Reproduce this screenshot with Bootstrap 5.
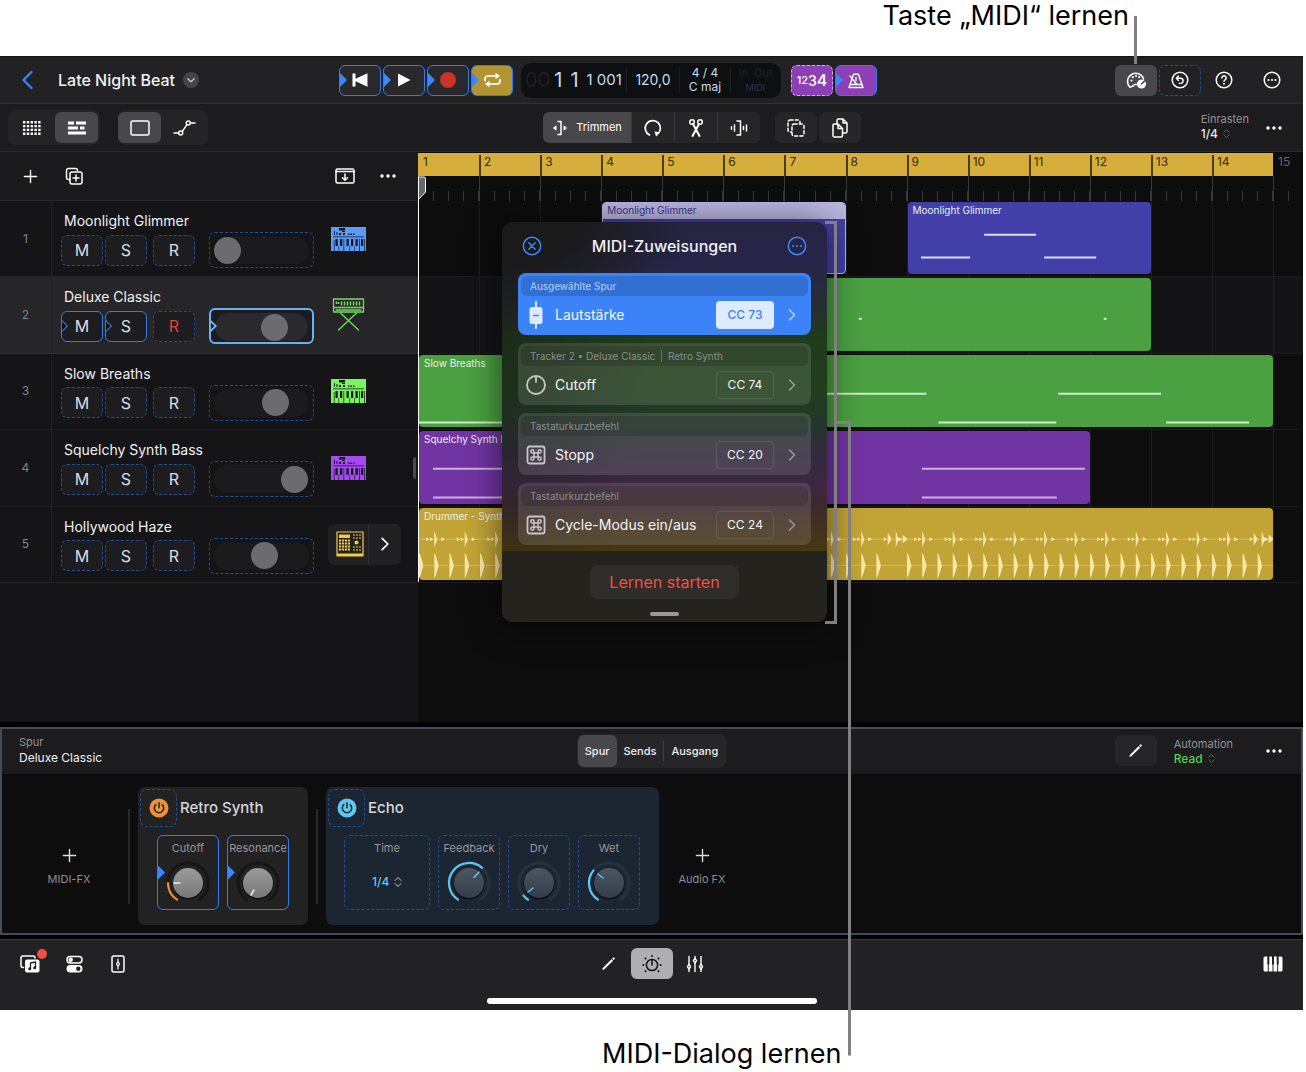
<!DOCTYPE html>
<html lang="de">
<head>
<meta charset="utf-8">
<meta name="viewport" content="width=device-width, initial-scale=1">
<title>Late Night Beat – MIDI-Zuweisungen</title>
<link href="https://cdn.jsdelivr.net/npm/bootstrap@5.3.0/dist/css/bootstrap.min.css" rel="stylesheet">
<style>
:root{--blue:#2f7cf0;--line:#2c2c2e;--cyan:#5ac8f5;--gold:#d7ae3b;fill:none;stroke:currentColor;stroke-width:1.5;stroke-linecap:round;stroke-linejoin:round}
body{background:#fff;font-family:Inter,"Noto Sans",sans-serif;font-size:14px;line-height:16px;color:#f0f0f2}
svg{display:block;flex:none}
.f{fill:currentColor;stroke:none}
.callout{margin:0;color:#000;font-size:27px;line-height:32px}
.callout-top{height:56px;padding-right:177px;text-align:right}
.callout-bottom{padding:28px 0 0 602px;height:61px}
.studio{margin-right:3px;background:#000;position:relative}
.half{flex:1 1 0;min-width:0}
.bar-top{height:48px;background:#222224;border-bottom:1px solid #333335;border-top:1px solid #151515}
.lead-col{width:339px}
.song{font-size:16px;font-weight:500}
.key,.tool{display:flex;align-items:center;justify-content:center;width:42px;height:31px;padding:0;border:1px solid transparent;border-radius:6px;color:#fff;background:transparent;position:relative;overflow:hidden;flex:none}
.key:hover,.tool:hover{color:#fff}
.mapped{border-color:var(--blue);background:#29292c}
.mapped::before{content:"";position:absolute;left:0;top:50%;margin-top:-7px;width:7px;height:14px;background:#3a86fb;clip-path:polygon(0 0,100% 50%,0 100%)}
.dotted{border:1px dashed #214f96}
.hollow{border-color:var(--blue);background:#2c2c30}
.hollow::before{content:"";position:absolute;left:-6px;top:50%;margin-top:-5px;width:10px;height:10px;border:1px solid #3a86fb;transform:rotate(45deg);background:#111}
.cyc{background:#b39432}
.pur,.pur:hover{background:#8d3fb5}
.btn.pur.dotted{border-color:#d9a6f0}
.on,.on:hover{background:#48484c}
.lcd{width:260px;height:35px;border-radius:10px;background:#0d0f10;color:#c7dcf2}
.lcd>div{height:28px;border-left:1px solid #1a1d20}
.lcd>div:first-child{border:0}
.dim{color:#1d2023}
.count-in{margin-left:10px}
.tools{height:48px;background:#1c1c1e;border-bottom:1px solid #29292b}
.set{background:#242427;border-radius:8px;padding:2px;gap:2px}
.set .tool{width:43px;height:31px}
.cap{font-size:11px;line-height:14px;color:#929297}
.pick{appearance:none;background:transparent;border:0;padding:0;color:#e8e8ea;font:500 12px/14px Inter,sans-serif;outline:0}
.flat{background:#262629}
.left{width:418px;flex:none;background:#151517}
.lhead{height:49px;background:#1a1a1c;border-bottom:1px solid #29292b}
.rows{display:grid;grid-template-rows:repeat(5,1fr);height:382px}
.trk{display:flex;border-bottom:1px solid #222224;min-height:0}
.trk.sel{background:#262628;border-color:#303032}
.num{width:52px;border-right:1px solid #222224;font-size:12px;color:#838388;flex:none}
.tname{font-size:14px;line-height:18px;padding-left:3px}
.msr{background:#1d1d20;font-size:16px;color:#dcdce0;height:31px}
.fader{width:105px;height:36px;border-radius:6px;padding:3px 4px;flex:none}
.fader.live{border:2px solid #68b1f5;position:relative;overflow:hidden;background:#1c1c1e}
.fader.live::before{content:"";position:absolute;z-index:1;left:-6px;top:11px;width:10px;height:10px;border:2px solid #68b1f5;transform:rotate(45deg);background:#111}
.fader input{appearance:none;display:block;width:100%;height:28px;border-radius:14px;background:#1b1b1d;margin:0}
.fader.live input{background:#2a2a2d}
.fader input::-webkit-slider-thumb{appearance:none;width:27px;height:27px;border-radius:50%;background:#6c6c70}
.instr{padding-left:17px}
.split{height:41px;background:#212124;border-radius:6px;margin-left:-3px}
.right{min-width:0;background:#0d0d0d}
.bars{display:grid;grid-template-columns:repeat(14,1fr) 30px}
.rnum>div{height:24px;border-top:1px solid #0d0d0d;background:linear-gradient(#4b3d15,#4b3d15) 0 100%/2px 21px no-repeat var(--gold);color:#35290a;font-size:12px;line-height:17px;padding-left:5px}
.rnum>div:first-child{background:var(--gold)}
.rnum>div:last-child{background:#0d0d0d;color:#66666a}
.rtick>div{height:25px;border-left:1px solid #3a3a3c;background:repeating-linear-gradient(90deg,transparent 0 calc(25% - 1px),#38383a calc(25% - 1px) 25%) 0 100%/100% 10px no-repeat}
.rtick>div:last-child{background-image:repeating-linear-gradient(90deg,transparent 0 14px,#38383a 14px 15px)}
.lane{border-bottom:1px solid #1b1b1d;padding:1px 0 2px;min-height:0;position:relative}
.lane.sel{background:#141416}
.vlines{position:absolute;inset:0}
.vlines i{border-left:1px solid #1e1e20}
.reg{position:relative;border-radius:4px;overflow:hidden;font-size:10px;line-height:14px;margin-left:1px;min-width:0}
.reg span{position:absolute;left:5px;top:1px;white-space:nowrap;color:#e8f0e8}
.reg svg{width:100%;height:100%;stroke-width:2;stroke-linecap:butt}
.indigo{background:#423fa8}.green{background:#4ba041}.violet{background:#7134a3}.sand{background:#c2a436}
.picked{border:1px solid #b9b5e4}
.picked::before{content:"";position:absolute;inset:0 0 auto;height:16px;background:#b7b3dc}
.reg.picked span{color:#37328a;left:4px;top:0}
.play{position:absolute;z-index:1;left:418px;top:120px;width:10px;height:406px;color:#fff}
.spare{height:139px}
.grip{position:absolute;left:413px;top:401px;width:3px;height:22px;background:#4a4a4d;border-radius:2px}
.plug{margin-top:5px;border:2px solid #454d54;background:#0d0d0d;height:208px}
.phead{height:45px;background:#1c1c1e;padding-bottom:2px}
.seg{background:#262629;border-radius:7px;padding:1px;height:34px}
.seg .btn{font-size:11px;font-weight:500;line-height:14px;color:#eee;border:0;border-radius:6px;padding:0 7px;height:32px}
.seg .rule{width:1px;height:20px;background:#404044}
.fxadd{color:#8d8d92;font-size:11px;width:126px;background:none;border:0;padding:22px 0 0}
.vr-line{width:2px;height:95px;background:#29292b}
.unit{background:#222223;border-radius:7px;height:138px;padding:2px}
.unit.sea{background:#1b2632}
.pw{width:37px;height:38px;border-radius:7px;display:flex;align-items:center;justify-content:center;background:transparent;padding:0}
.uname{font-size:15px;font-weight:500;color:#d6d6da;margin-left:3px}
.kbox{width:62px;height:75px;border-radius:6px;font-size:11px;line-height:14px;color:#96969b;padding-top:5px;position:relative;overflow:hidden;text-align:center;border-width:1px;border-style:solid}
.kbox.mapped{background:transparent}
.kbox.dotted{border-style:dashed}
.kbox span{display:block;white-space:nowrap}
.kbox svg{margin:4px auto 0}
.kbox.time{width:86px}
.knobs{padding:8px 0 0 17px}
.sea .knobs{padding-left:16px}
.foot{margin-top:4px;background:#222224;height:71px;border-top:1px solid #38383a}
.foot .tool{width:44px}
.home{width:330px;height:6px;border-radius:3px;background:#fff;margin:19px auto 0}
.dlg{position:absolute;z-index:3;left:502px;top:166px;width:325px;height:400px;border-radius:11px;overflow:hidden;background:radial-gradient(190px 110px at 0 0,#1a1a1a 35%,transparent),radial-gradient(150px 380px at 0 20%,rgba(24,28,24,.55),transparent),linear-gradient(#26243f 0,#26254a 40px,#25302f 90px,#203c1b 120px,#203f1b 165px,#24372b 200px,#322a3c 232px,#3d2742 262px,#3d2a2b 285px,#463812 328px)}
.shade{position:absolute;z-index:2;left:502px;top:166px;width:325px;height:400px;border-radius:11px;box-shadow:0 4px 34px rgba(0,0,0,.6)}
.dhead{height:51px;padding:0 20px 4px;font-size:16px;font-weight:500}
.dhead button,.plain{background:none;border:0;padding:0;color:#fff}
.dhead button{color:#3a86fb}
.map{display:block;height:62px;margin:0 16px 8px;padding:3px;border-radius:8px;background:rgba(255,255,255,.12);color:#f4f4f5;text-decoration:none}
.map:hover{color:#f4f4f5}
.map .from{height:20px;border-radius:6px;background:rgba(0,0,0,.14);color:#8a8d8a;font-size:10px;line-height:20px;padding-left:9px}
.map .what{height:37px;padding:0 12px 0 5px;font-size:14px}
.map .what>span:first-of-type{margin-left:9px}
.map.hot{background:#3b83f7}.map.hot .from{background:#316fd3;color:#b4cff8}
.cc{width:58px;height:28px;border:1px solid rgba(255,255,255,.1);border-radius:4px;font-size:12px;line-height:26px;text-align:center;margin-right:14px}
.hot .cc{background:#deeafd;color:#3b83f7;font-weight:500}
.dfoot{background:#24231e;height:72px;padding-top:14px;margin-top:-2px}
.learn,.learn:hover{width:149px;height:34px;background:#2e2d2a;color:#ee5044;border-radius:7px;font-size:16px;padding:0;border:0}
.grab{width:29px;height:4px;border-radius:2px;background:#98989b;margin:13px auto 0}
.leaders{position:absolute;left:0;top:0;z-index:5;pointer-events:none;stroke:#808080;stroke-width:3;stroke-linecap:butt;stroke-linejoin:miter}
</style>
<script src="https://cdn.jsdelivr.net/npm/bootstrap@5.3.0/dist/js/bootstrap.bundle.min.js"></script>
</head>
<body>
<svg width="0" height="0" class="position-absolute" aria-hidden="true">
 <linearGradient id="gl" x2="0" y2="1"><stop stop-color="#9b9b9b"/><stop offset="1" stop-color="#777"/></linearGradient>
 <linearGradient id="gd" x2="0" y2="1"><stop stop-color="#4c5662"/><stop offset="1" stop-color="#343e49"/></linearGradient>
 <symbol id="dots" viewBox="0 0 18 6"><g class="f"><circle cx="3" cy="3" r="1.7"/><circle cx="9" cy="3" r="1.7"/><circle cx="15" cy="3" r="1.7"/></g></symbol>
 <symbol id="updown" viewBox="0 0 8 12"><path d="M1 4.5 4 1.5l3 3M1 7.5l3 3 3-3" stroke-width="1.1"/></symbol>
 <symbol id="plus" viewBox="0 0 16 16"><path d="M8 1.5v13M1.500 8h13"/></symbol>
 <symbol id="chev" viewBox="0 0 8 14"><path d="M1.500 2 6.500 7l-5 5"/></symbol>
 <symbol id="power" viewBox="0 0 20 20"><circle cx="10" cy="10" r="9.500" class="f"/><path d="M10 4.700v5M6.800 6.600a4.700 4.700 0 1 0 6.400 0" stroke="#20262c" stroke-width="1.500"/></symbol>
 <symbol id="pencil" viewBox="0 0 16 16"><path d="M3 13.200 11.500 4.700" stroke-width="2.200"/><path d="m13.300 2.900.3-.3" stroke-width="2.200"/><path class="f" d="m1.400 14.700.7-2.300 1.600 1.600z"/></symbol>
 <symbol id="cmd" viewBox="0 0 20 20"><rect x="1.500" y="1.500" width="17" height="17" rx="2" stroke-width="1.800"/><path d="M8 8h4v4H8zM8 8V6.400A1.600 1.600 0 1 0 6.400 8H8M12 8h1.600A1.600 1.600 0 1 0 12 6.400V8M12 12v1.600a1.600 1.600 0 1 0 1.600-1.600H12M8 12H6.400A1.600 1.600 0 1 0 8 13.600V12" stroke-width="1.500"/></symbol>
 <symbol id="keys" viewBox="0 0 35 24"><path class="f" d="M0 0h35v24H0z"/><g fill="#0e1420" stroke="none"><path d="M8 1h6v2.500H8zM3 4h1v4H3zM5.500 5h1v3h-1zM8 6h2v2H8zM11 4h3v1h-3zM12 6h2v2h-2zM17 6.500h1.500V8H17zM19.500 6.500H21V8h-1.500zM22 6.500h1.500V8H22zM2 9.500h31v.7H2zM4.500 12h2.200v7H4.500zM9 12h2.200v7H9zM15.500 12h2.200v7h-2.200zM20 12h2.200v7H20zM24.500 12h2.200v7h-2.200zM30 12h2.200v7H30zM2.800 13h.7v11h-.7zM7.500 19h.6v5h-.6zM12.500 12h.7v12h-.7zM18.500 19h.6v5h-.6zM23 19h.6v5H23zM28 12h.7v12H28zM33 12h.7v12H33z"/></g></symbol>
</svg>

<div class="position-relative">
<p class="callout callout-top">Taste „MIDI“ lernen</p>

<main class="studio">
 <header class="bar-top d-flex align-items-center">
  <div class="lead-col d-flex align-items-center ps-3">
   <button class="plain ms-1 me-4" aria-label="Zurück"><svg width="14" height="20" viewBox="0 0 14 20" stroke="#3a86fb" stroke-width="2.200"><path d="M11.500 2 3.500 10l8 8"/></svg></button>
   <span class="song">Late Night Beat</span>
   <button class="plain ms-2" aria-label="Projektmenü"><svg width="16" height="16" viewBox="0 0 16 16"><circle cx="8" cy="8" r="8" fill="#454549" stroke="none"/><path d="m4.800 6.800 3.200 3 3.200-3" stroke="#c8c8cc" stroke-width="1.300"/></svg></button>
  </div>
  <div class="d-flex align-items-center">
   <div class="d-flex me-2" style="gap:2px">
    <button class="btn key mapped" aria-label="Zum Anfang"><svg width="18" height="16" viewBox="0 0 18 16"><path class="f" d="M1.500 1.500h3v5.200L16.500 1.300v13.400L4.500 9.300v5.200h-3z"/></svg></button>
    <button class="btn key mapped" aria-label="Wiedergabe"><svg width="16" height="16" viewBox="0 0 16 16"><path class="f" d="M2 1.500 14.500 8 2 14.500z"/></svg></button>
    <button class="btn key mapped" aria-label="Aufnahme"><svg width="18" height="18" viewBox="0 0 18 18"><circle cx="9" cy="9" r="8" fill="#c8332b" stroke="none"/></svg></button>
    <button class="btn key mapped cyc" aria-label="Cycle"><svg width="19" height="16" viewBox="0 0 19 16" stroke-width="1.700"><path d="M2 8.500V7a3 3 0 0 1 3-3h8M17 7.500V9a3 3 0 0 1-3 3H6"/><path class="f" d="m12.500.8 4.500 3.200-4.500 3.200zM6.500 8.800 2 12l4.500 3.200z"/></svg></button>
   </div>
   <div class="lcd d-flex align-items-center">
    <div style="width:105px" class="d-flex align-items-center ps-1"><span class="fs-5 dim">00</span><span class="fs-5 ms-1 me-2">1</span><span class="fs-5 me-2">1</span><span style="font-size:15px" class="text-nowrap">1 001</span></div>
    <div style="width:53px" class="d-flex align-items-center justify-content-center">120,0</div>
    <div style="width:51px;font-size:12px;line-height:14px" class="text-center">4 / 4<br>C maj</div>
    <div style="width:50px;font-size:11px;line-height:14px" class="text-center dim text-nowrap">In&nbsp; Out<br><small style="font-size:9px;color:#24384a">MIDI</small></div>
   </div>
   <div class="d-flex count-in" style="gap:2px">
    <button class="btn key pur dotted" aria-label="Einzähler"><span class="d-flex align-items-center fw-medium"><span style="font-size:11px">12</span><span style="font-size:14px">3</span><span style="font-size:16px">4</span></span></button>
    <button class="btn key mapped pur" aria-label="Metronom"><svg width="18" height="17" viewBox="0 0 18 17" stroke-width="1.400"><path d="M2 15.500 6.600 2.200h4.800L16 15.500zM3 12.500h12M9.500 12 3 4M9 5.500v3"/></svg></button>
   </div>
  </div>
  <div class="d-flex align-items-center ms-auto" style="gap:2px;padding-right:10px">
   <button class="btn key on" aria-label="MIDI lernen"><svg width="21" height="19" viewBox="0 0 21 19"><path d="M7 14.800 4 16.300A8.200 8.200 0 1 1 17.600 8"/><path d="m7 15 1.500-1.500H11"/><g class="f"><circle cx="5.500" cy="9.500" r="1.100"/><circle cx="6.800" cy="6.200" r="1.100"/><circle cx="10" cy="4.800" r="1.100"/><circle cx="13.200" cy="6.200" r="1.100"/><circle cx="15.500" cy="13" r="4.500"/></g><path d="m15.500 13 3-3" stroke="#48484c"/></svg></button>
   <button class="btn key dotted" aria-label="Widerrufen"><svg width="18" height="18" viewBox="0 0 18 18"><circle cx="9" cy="9" r="7.800"/><path d="M7.500 5 5.300 7.200l2.200 2.200M5.500 7.200h4a2.600 2.600 0 0 1 0 5.200H8.300" stroke-width="1.400"/></svg></button>
   <button class="btn key" aria-label="Hilfe"><svg width="18" height="18" viewBox="0 0 18 18"><circle cx="9" cy="9" r="7.800"/><path d="M6.900 7a2.100 2.100 0 1 1 3.400 1.600c-.8.600-1.300.9-1.300 1.700"/><circle class="f" cx="9" cy="12.700" r="1"/></svg></button>
   <button class="btn key ms-1" aria-label="Mehr"><svg width="18" height="18" viewBox="0 0 18 18"><circle cx="9" cy="9" r="7.800"/><g class="f"><circle cx="5.500" cy="9" r="1.100"/><circle cx="9" cy="9" r="1.100"/><circle cx="12.500" cy="9" r="1.100"/></g></svg></button>
  </div>
 </header>

 <div class="tools d-flex align-items-center">
  <div class="d-flex ps-2" style="width:543px;gap:18px">
   <div class="set d-flex">
    <button class="btn tool" aria-label="Zellen"><svg width="18" height="14" viewBox="0 0 18 14" stroke-width="2.400" stroke-linecap="butt" stroke-dasharray="2.400 1.400"><path d="M0 1.300h18M0 5.100h18M0 8.900h18M0 12.700h18"/></svg></button>
    <button class="btn tool on" aria-label="Spuren"><svg width="18" height="14" viewBox="0 0 18 14" stroke-width="3" stroke-linecap="butt"><path d="M0 2h6M8 2h10M0 7h10M12 7h4.500M0 12h18"/></svg></button>
   </div>
   <div class="set d-flex ps-0">
    <button class="btn tool on" aria-label="Regionen"><svg width="20" height="16" viewBox="0 0 20 16"><rect x="1" y="1" width="18" height="14" rx="2"/></svg></button>
    <button class="btn tool" aria-label="Automation"><svg width="23" height="16" viewBox="0 0 23 16"><path d="M1 13h4.500M9.500 11.200l4.300-6.300M17.500 3H22"/><circle cx="7.700" cy="13" r="2"/><circle cx="15.300" cy="3" r="2"/></svg></button>
   </div>
  </div>
  <div class="d-flex">
   <button class="btn tool on rounded-end-0" style="width:88px;font-size:11px"><svg class="me-2" width="16" height="16" viewBox="0 0 16 16"><path d="M6 1.500h3v13H6"/><path class="f" d="M4.500 5.200v5.600L.8 8zM11.500 5.200v5.600L15.200 8z"/></svg>Trimmen</button>
   <div class="d-flex" style="gap:1px;background:#38383b;border-radius:0 6px 6px 0;overflow:hidden;padding-left:1px">
    <button class="btn tool rounded-0 flat" aria-label="Loop"><svg width="20" height="20" viewBox="0 0 20 20" stroke-width="1.700"><path d="M6.500 17A7.600 7.600 0 1 1 14 16.500"/><path class="f" d="m11.500 13.500 5 .8-3.500 4.200z"/></svg></button>
    <button class="btn tool rounded-0 flat" aria-label="Schere"><svg width="16" height="20" viewBox="0 0 16 20"><circle cx="4" cy="4" r="2.300"/><circle cx="12" cy="4" r="2.300"/><path d="m5 6 6.500 12M11 6 4.500 18" stroke-width="2"/></svg></button>
    <button class="btn tool rounded-0 flat" aria-label="Stretch"><svg width="18" height="18" viewBox="0 0 18 18"><path d="M7 2h3.500v14H7M4.500 6v6M13.500 7.500v3M1.500 7.800v2.400M16.500 6v6"/></svg></button>
   </div>
   <button class="btn tool flat" style="margin-left:15px" aria-label="Auswahl"><svg width="18" height="18" viewBox="0 0 18 18"><rect x="1" y="1" width="12" height="12" rx="2" stroke-dasharray="3 2.200"/><rect x="5" y="5" width="12" height="12" rx="2" stroke-dasharray="3 2.200" fill="#262629"/></svg></button>
   <button class="btn tool flat" style="margin-left:2px" aria-label="Kopieren"><svg width="18" height="20" viewBox="0 0 18 20"><path d="M6 6V2.500A1.500 1.500 0 0 1 7.500 1H12l4 4v8.500a1.500 1.500 0 0 1-1.500 1.500H12M12 1v4h4"/><path d="M3 6h4l4.500 4.500v7A1.500 1.500 0 0 1 10 19H3.500A1.500 1.500 0 0 1 2 17.500V7a1 1 0 0 1 1-1zM7 6v4.500h4.500"/></svg></button>
  </div>
  <div class="ms-auto d-flex align-items-center pe-1">
   <div class="me-3 pb-1"><label class="cap d-block" for="snap" style="line-height:16px">Einrasten</label><div class="d-flex align-items-center gap-1"><select class="pick" id="snap"><option>1/4</option></select><svg width="7" height="11" color="#66666a"><use href="#updown"/></svg></div></div>
   <button class="plain me-3" aria-label="Mehr"><svg width="18" height="6"><use href="#dots"/></svg></button>
  </div>
 </div>

 <div class="d-flex">
  <section class="left">
   <div class="lhead d-flex align-items-center">
    <button class="plain" style="margin:0 27px 0 23px" aria-label="Spur hinzufügen"><svg width="15" height="15"><use href="#plus"/></svg></button>
    <button class="plain" aria-label="Spur duplizieren"><svg width="18" height="18" viewBox="0 0 18 18"><path d="M5 12.500H3.500A2 2 0 0 1 1.500 10.500v-7a2 2 0 0 1 2-2h7a2 2 0 0 1 2 2"/><rect x="5" y="5" width="12" height="12" rx="2"/><path d="M11 8v6M8 11h6"/></svg></button>
    <button class="plain ms-auto" aria-label="Importieren"><svg width="20" height="16" viewBox="0 0 20 16"><rect x="1" y="1" width="18" height="14" rx="1.500"/><path d="M1 3.500h18M10 6v6M7.500 9.700 10 12.200l2.500-2.500"/></svg></button>
    <button class="plain ms-4" style="margin-right:21px" aria-label="Mehr"><svg width="18" height="6"><use href="#dots"/></svg></button>
   </div>
   <div class="rows" id="tracks"></div>
   <div class="spare"></div>
  </section>

  <section class="right flex-fill">
   <div class="bars rnum"><div>1</div><div>2</div><div>3</div><div>4</div><div>5</div><div>6</div><div>7</div><div>8</div><div>9</div><div>10</div><div>11</div><div>12</div><div>13</div><div>14</div><div>15</div></div>
   <div class="bars rtick" id="ticks"></div>
   <div class="rows" id="lanes">
    <div class="bars lane">
     <div class="reg indigo picked" style="grid-column:4/8"><span>Moonlight Glimmer</span></div>
     <div class="reg indigo" style="grid-column:9/13"><span>Moonlight Glimmer</span><svg viewBox="0 0 243 73" preserveAspectRatio="none" color="#dcdcf5"><path d="M13 56h49M76 33h52M136 56h52"/></svg></div>
    </div>
    <div class="bars lane sel">
     <div class="reg green" style="grid-column:4/13"><svg viewBox="0 0 549 73" preserveAspectRatio="none" color="#c9f0c4"><path d="M257 41h3M502 41h3"/></svg></div>
    </div>
    <div class="bars lane">
     <div class="reg green" style="grid-column:1/15"><span>Slow Breaths</span><svg viewBox="0 0 855 73" preserveAspectRatio="none" color="#c9f0c4"><path d="M0 68h100M400 39h108M520 68h118M640 39h103M748 68h83"/></svg></div>
    </div>
    <div class="bars lane">
     <div class="reg violet" style="grid-column:1/12"><span>Squelchy Synth Bass</span><svg viewBox="0 0 671 73" preserveAspectRatio="none" color="#cfaee6"><path d="M14 38h90M14 67h90M503 38h163M503 67h135"/></svg></div>
    </div>
    <div class="bars lane">
     <div class="reg sand" style="grid-column:1/15"><span>Drummer - Synthwave</span><svg id="wave" viewBox="0 0 855 73" preserveAspectRatio="none" color="#f7e8a8"></svg></div>
    </div>
   </div>
  </section>
 </div>
 <svg class="play" viewBox="0 0 10 406"><path d="M.5 1h5.500a1.500 1.500 0 0 1 1.500 1.500V16L1 23" fill="#68686b" stroke-width="1"/><path d="M.5 1v405" stroke-width="1"/></svg>
 <div class="grip"></div>

 <section class="plug">
  <div class="phead d-flex align-items-center">
   <div class="half"><div style="padding-left:17px"><div class="cap">Spur</div><div style="font-size:12px;line-height:18px">Deluxe Classic</div></div></div>
   <div class="seg d-flex align-items-center"><button class="btn on">Spur</button><button class="btn">Sends</button><span class="rule"></span><button class="btn">Ausgang</button></div>
   <div class="half d-flex align-items-center justify-content-end">
    <button class="btn tool flat" style="margin-right:17px" aria-label="Bearbeiten"><svg width="15" height="15"><use href="#pencil"/></svg></button>
    <div class="me-4"><label class="cap d-block" for="auto" style="line-height:16px">Automation</label><div class="d-flex align-items-center gap-1"><select class="pick" id="auto" style="color:#52cf52"><option>Read</option></select><svg width="7" height="11" color="#66666a"><use href="#updown"/></svg></div></div>
    <button class="plain ms-2" style="margin-right:18px" aria-label="Mehr"><svg width="18" height="6"><use href="#dots"/></svg></button>
   </div>
  </div>
  <div class="d-flex align-items-center" style="padding-top:13px">
   <button class="fxadd d-flex flex-column align-items-center gap-2 ps-2"><svg width="15" height="15" color="#ddd"><use href="#plus"/></svg>MIDI-FX</button>
   <span class="vr-line"></span>
   <div class="unit" style="width:170px;margin:0 8px">
    <div class="d-flex align-items-center"><button class="pw dotted" aria-label="Retro Synth ein/aus" style="color:#f09235"><svg width="20" height="20"><use href="#power"/></svg></button><span class="uname">Retro Synth</span></div>
    <div class="d-flex gap-2 knobs" data-knobs="retro"></div>
   </div>
   <span class="vr-line"></span>
   <div class="unit sea" style="width:333px;margin-left:8px">
    <div class="d-flex align-items-center"><button class="pw dotted" aria-label="Echo ein/aus" style="color:#5ac8f5"><svg width="20" height="20"><use href="#power"/></svg></button><span class="uname">Echo</span></div>
    <div class="d-flex gap-2 knobs" data-knobs="echo">
     <div class="kbox time dotted"><label for="time">Time</label><div class="d-flex align-items-center justify-content-center gap-1 mt-3 pt-1"><select class="pick" id="time" style="color:#5ac8f5"><option>1/4</option></select><svg class="m-0" width="8" height="12" color="#7a8088"><use href="#updown"/></svg></div></div>
    </div>
   </div>
   <button class="fxadd d-flex flex-column align-items-center gap-2" style="width:86px"><svg width="15" height="15" color="#ddd"><use href="#plus"/></svg>Audio FX</button>
  </div>
 </section>

 <footer class="foot pt-2">
  <div class="d-flex align-items-center">
   <div class="half d-flex ps-2">
    <button class="btn tool overflow-visible" aria-label="Browser"><svg width="20" height="18" viewBox="0 0 20 18"><path d="M3.500 12.500H3a2 2 0 0 1-2-2V3a2 2 0 0 1 2-2h10a2 2 0 0 1 2 2"/><rect x="5" y="4.500" width="14.500" height="13" rx="2" class="f"/><path d="M10.500 13.500V8l5-1v5.500" stroke="#222224" stroke-width="1.300"/><g fill="#222224" stroke="none"><circle cx="9.700" cy="13.800" r="1.500"/><circle cx="14.700" cy="12.800" r="1.500"/></g></svg><svg class="position-absolute" style="left:28px;top:0" width="10" height="10" viewBox="0 0 10 10"><circle cx="5" cy="5" r="5" fill="#ee5044" stroke="none"/></svg></button>
    <button class="btn tool" aria-label="Einstellungen"><svg width="17" height="18" viewBox="0 0 17 18"><rect x="1" y="1.500" width="15" height="6.500" rx="3.200"/><circle class="f" cx="4.700" cy="4.700" r="2.200"/><rect x=".5" y="10" width="16" height="7.500" rx="3.700" class="f"/><circle cx="12.300" cy="13.700" r="2.200" fill="#222224" stroke="none"/></svg></button>
    <button class="btn tool" aria-label="Kanalzug"><svg width="14" height="18" viewBox="0 0 14 18"><rect x="1" y="1" width="12" height="16" rx="1.500"/><path d="M7 4v2.500M7 11.500V14M7 6.500 8.500 9 7 11.500 5.500 9z" stroke-width="1.200"/></svg></button>
   </div>
   <button class="btn tool" aria-label="Stift"><svg width="15" height="15"><use href="#pencil"/></svg></button>
   <button class="btn tool" style="background:#aeaeb3;color:#111;width:42px" aria-label="Plug-ins"><svg width="22" height="20" viewBox="0 0 22 20"><circle cx="11" cy="11" r="5.600"/><path d="M11 6v5"/><g class="f"><circle cx="11" cy="2" r="1"/><circle cx="4.500" cy="4.500" r="1"/><circle cx="17.500" cy="4.500" r="1"/><circle cx="2.300" cy="11" r="1"/><circle cx="19.700" cy="11" r="1"/><circle cx="4.500" cy="17.300" r="1"/><circle cx="17.500" cy="17.300" r="1"/></g></svg></button>
   <button class="btn tool" aria-label="Mixer"><svg width="18" height="18" viewBox="0 0 18 18" stroke-width="1.400"><path d="M3 1.500v8M3 14v2.500M9 1.500v2M9 8v8.500M15 1.500v8M15 14v2.500"/><path d="m3 9.500 1.600 2.200L3 14l-1.600-2.300zM9 3.500l1.600 2.200L9 8 7.400 5.700zM15 9.500l1.600 2.200L15 14l-1.600-2.300z"/></svg></button>
   <div class="half d-flex justify-content-end pe-2"><button class="btn tool" aria-label="Keyboard"><svg width="20" height="16" viewBox="0 0 20 16"><rect class="f" x=".5" y=".5" width="19" height="15" rx="1.500"/><path d="M5.300 0v8.500M10 0v8.500M14.700 0v8.500" stroke="#222224" stroke-width="2" stroke-linecap="butt"/><path d="M5.300 8v8M10 8v8M14.700 8v8" stroke="#222224" stroke-width="1" stroke-linecap="butt"/></svg></button></div>
  </div>
  <div class="home"></div>
 </footer>

 <div class="shade"></div>
 <section class="dlg" role="dialog" aria-label="MIDI-Zuweisungen">
  <div class="dhead d-flex align-items-center justify-content-between">
   <button aria-label="Schließen"><svg width="20" height="20" viewBox="0 0 20 20"><circle cx="10" cy="10" r="8.700"/><path d="m6.800 6.800 6.400 6.400M13.200 6.800l-6.400 6.400"/></svg></button>
   <span>MIDI-Zuweisungen</span>
   <button aria-label="Optionen"><svg width="20" height="20" viewBox="0 0 20 20"><circle cx="10" cy="10" r="8.700"/><g class="f"><circle cx="6" cy="10" r="1.100"/><circle cx="10" cy="10" r="1.100"/><circle cx="14" cy="10" r="1.100"/></g></svg></button>
  </div>
  <a class="map hot" href="#"><div class="from">Ausgewählte Spur</div><div class="what d-flex align-items-center"><svg width="20" height="28" viewBox="0 0 20 28" color="#deeafd"><path d="M10 1v26" stroke-width="2"/><rect class="f" x="3.500" y="6" width="13" height="17" rx="2.500"/><path d="M7.500 14.500h5" stroke="#3b83f7"/></svg><span class="flex-fill">Lautstärke</span><span class="cc">CC 73</span><svg width="8" height="14" color="#b4cff8"><use href="#chev"/></svg></div></a>
  <a class="map" href="#"><div class="from">Tracker 2 • Deluxe Classic&nbsp; <span style="border-left:1px solid #6c706c;padding-left:6px">Retro Synth</span></div><div class="what d-flex align-items-center"><svg width="20" height="20" viewBox="0 0 20 20" color="#c4c8c4" stroke-width="1.800"><circle cx="10" cy="10" r="9"/><path d="M10 1.500V7"/></svg><span class="flex-fill">Cutoff</span><span class="cc">CC 74</span><svg width="8" height="14" color="#9a9d9a"><use href="#chev"/></svg></div></a>
  <a class="map" href="#"><div class="from">Tastaturkurzbefehl</div><div class="what d-flex align-items-center"><svg width="20" height="20" color="#c9c6cc"><use href="#cmd"/></svg><span class="flex-fill">Stopp</span><span class="cc">CC 20</span><svg width="8" height="14" color="#9a979d"><use href="#chev"/></svg></div></a>
  <a class="map" href="#"><div class="from">Tastaturkurzbefehl</div><div class="what d-flex align-items-center"><svg width="20" height="20" color="#c9c6cc"><use href="#cmd"/></svg><span class="flex-fill">Cycle-Modus ein/aus</span><span class="cc">CC 24</span><svg width="8" height="14" color="#9a979d"><use href="#chev"/></svg></div></a>
  <div class="dfoot text-center"><button class="btn learn">Lernen starten</button><div class="grab"></div></div>
 </section>
</main>

<p class="callout callout-bottom">MIDI-Dialog lernen</p>
<svg class="leaders" width="1306" height="1072" viewBox="0 0 1306 1072"><path d="M1135.500 16v48M825 222.500h10.500v400H825M835 422.500h14.500v633"/></svg>
</div>

<script>
// Track list
const synth = c => `<svg width="35" height="24" color="${c}"><use href="#keys"/></svg>`;
const stand = `<svg width="35" height="34" viewBox="0 0 35 34" color="#6fe05a" stroke-width="1.300"><rect x="2.500" y="1" width="30" height="13"/><path d="M5.500 6V3.500M7.500 6V4M10.500 3.500v4M13.500 3.500v4M16.500 3.500v4M19.500 3.500v4M22.500 3.500v4M25.500 3.500v4M28.500 3.500v4" stroke-width="1.500" stroke-linecap="butt"/><path d="M2.500 9.500h30M5 12h25M9.500 15l18 17M25.500 15l-18 17"/></svg>`;
const drum = `<div class="split d-flex align-items-center"><svg width="28" height="26" viewBox="0 0 28 26" color="#f2cb45" class="ms-2"><rect x="1" y="1" width="26" height="24" stroke-width="1.200"/><g class="f"><path d="M3 3.500h11v3.500H3zM1 22.500h26V25H1z"/><circle cx="20.500" cy="11.500" r="2"/></g><path d="M3 9.500h11M3 12.500h11M3 15.500h11M3 18.500h11" stroke-width="2.200" stroke-dasharray="2.200 .8" stroke-linecap="butt"/><path d="M17 4h8M17 7h8M17 16h8M17 19h8" stroke-width="1" stroke-dasharray="2 1" stroke-linecap="butt"/></svg><button class="plain d-flex align-items-center justify-content-center ms-1" style="width:33px;height:41px;border-left:1px solid #303033" aria-label="Öffnen"><svg width="10" height="16"><use href="#chev"/></svg></button></div>`;
const tracks = [["Moonlight Glimmer",0,synth("#5b9bf8")],["Deluxe Classic",69,stand],["Slow Breaths",70,synth("#78f55c")],["Squelchy Synth Bass",99,synth("#a848f5")],["Hollywood Haze",55,drum]];
document.getElementById("tracks").innerHTML = tracks.map(([name,vol,icon],i)=>{
  const s = i===1, ms = s ? "hollow" : "dotted";
  return `<div class="trk ${s?"sel":""}"><div class="num d-flex align-items-center justify-content-center">${i+1}</div>
  <div class="d-flex flex-column" style="padding:11px 0 0 9px;width:262px"><div class="tname">${name}</div>
  <div class="d-flex align-items-center" style="margin-top:2px"><button class="btn key msr ${ms}">M</button><button class="btn key msr ${ms}" style="margin:0 6px 0 2px">S</button><button class="btn key msr dotted"${s?' style="color:#d8453c"':''}>R</button>
  <div class="fader ${s?"live":"dotted"}" style="margin-left:14px"><input type="range" value="${vol}" aria-label="Lautstärke ${name}"></div></div></div>
  <div class="d-flex align-items-center instr">${icon}</div></div>`;
}).join("");

// Ruler ticks and bar lines
document.getElementById("ticks").innerHTML = "<div></div>".repeat(15);
document.querySelectorAll(".lane").forEach(l=>l.insertAdjacentHTML("afterbegin",'<div class="vlines bars">'+"<i></i>".repeat(15)+"</div>"));

// Drum waveform: kicks on each beat, snares on every second beat
let w = "", q = 855/56;
for(let k=0;k<56;k++){ if(k===31) continue; const x=(k*q).toFixed(1); w+=`<path class="f" d="M${x} 45 l1.500 3 3 10 -3 10 -1.500 3z"/>`; }
for(let k=1;k<56;k+=2){ const x=k*q; const big=k===31||k===55;
  w+=`<path class="f" d="M${(x+(big?4:0)).toFixed(1)} 23l1 3 2 6-2 5-1 3z"/><path class="f" d="M${x-8} 29.500l3 2-3 2zM${x-4} 29.500l3 2-3 2zM${x+7} 29.500l4 2-4 2z"/>`;
  if(big) w+=`<path class="f" d="M${x-4} 25l4 6.500-4 6zM${x+11} 27l5 4.500-5 4zM${x+5} 29l4 2.500-4 2.500z"/>`; }
w+='<path d="M0 31.500h855M0 58h855" stroke-width="1" opacity=".35"/>';
document.getElementById("wave").innerHTML = w;

// Knobs: label, frame, face gradient, ring and value colours, end of value arc, pointer, large-arc flag
function knob(label,cls,face,ring,col,end,ptr,big){
  const arc = end?`<path d="M-11 16.700A20 20 0 ${big} 1 ${end}" stroke="${col}" stroke-width="2.200"/>`:"";
  return `<div class="kbox ${cls}"><span>${label}</span><svg width="48" height="48" viewBox="-24 -24 48 48"><path d="M-11 16.700A20 20 0 1 1 11 16.700" stroke="${ring}" stroke-width="3"/><circle r="15.500" cy="1" fill="#0008" stroke="none"/><circle r="15" fill="url(#${face})" stroke="none"/>${arc}<path d="${ptr}" stroke="${end&&cls==="dotted"?col:"#eee"}"/></svg></div>`;
}
document.querySelector('[data-knobs=retro]').innerHTML = knob("Cutoff","mapped","gl","#161616","#f09235","-20 0","M-14 0h6",0)+knob("Resonance","mapped","gl","#161616","","","M-7 12l3-5",0);
document.querySelector('[data-knobs=echo]').insertAdjacentHTML("beforeend",
  knob("Feedback","dotted","gd","#27313c","#5ac8f5","13 -15.200","M10-11l-5 5.500",1)+knob("Dry","dotted","gd","#27313c","#5ac8f5","-15.500 12.600","M-11 9l5-4",0)+knob("Wet","dotted","gd","#27313c","#5ac8f5","-15.500-12.600","M-11-9l5 4",0));
</script>
</body>
</html>
